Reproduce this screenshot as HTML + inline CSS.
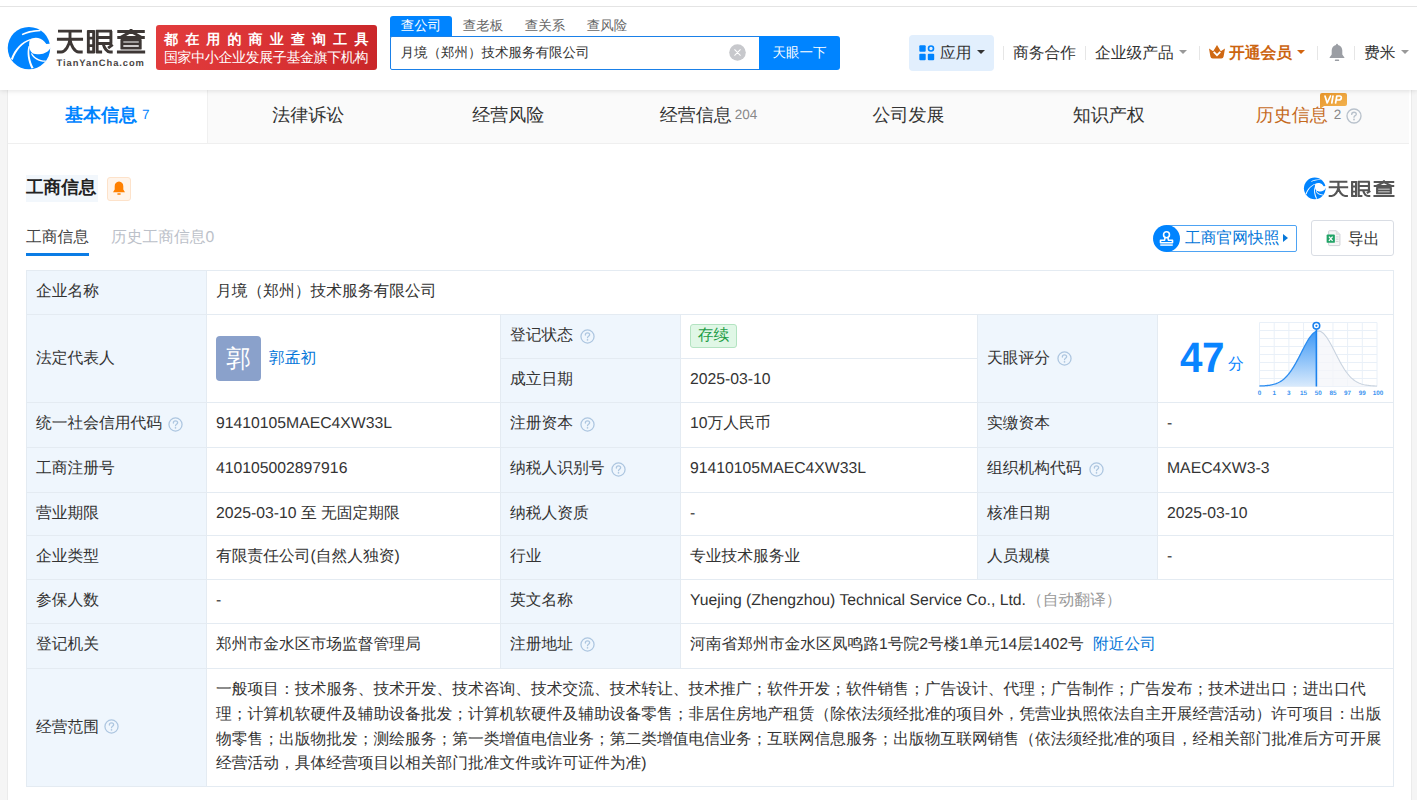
<!DOCTYPE html>
<html lang="zh"><head>
<meta charset="utf-8">
<title>天眼查</title>
<style>
*{box-sizing:border-box;margin:0;padding:0}
html,body{width:1417px;height:800px;overflow:hidden;background:#f5f5f5}
body{font-family:"Liberation Sans",sans-serif;font-size:15.75px;color:#333;position:relative;line-height:1;text-rendering:geometricPrecision}
.abs{position:absolute;white-space:nowrap}
a{text-decoration:none;color:#0677d9}
/* header */
#header{position:absolute;left:0;top:0;width:1417px;height:90px;background:#fff;box-shadow:0 1px 5px rgba(0,0,0,.11);z-index:5}
#card{position:absolute;left:7px;top:90px;width:1405px;height:720px;background:#fff;border-left:1px solid #ebebeb;border-right:1px solid #ebebeb}

/* header items */
#header{top:0;height:90px}
#header .line{position:absolute;left:0;top:6px;width:1417px;height:1px;background:#e4e4e4}
#banner{left:156px;top:25px;width:221px;height:45px;border-radius:3px;background:linear-gradient(100deg,#e23c3d 0%,#d83133 60%,#c92629 100%);color:#fff}
#banner .l1{position:absolute;left:8px;top:7px;font-size:14px;font-weight:bold;line-height:14px}
#banner .l2{position:absolute;left:8px;top:25px;font-size:14px;letter-spacing:-0.4px;line-height:14px}
#stab{left:390px;top:15.5px;height:21px;font-size:13.5px;line-height:20px}
#stab>span{display:inline-block;width:62px;text-align:center;color:#666;height:21px}
#stab>span.on{background:#0084ff;color:#fff;border-radius:3px 3px 0 0}
#sbox{left:390px;top:36px;width:370px;height:34px;border:1px solid #1a80e8;border-radius:2px 0 0 2px;background:#fff;font-size:13.5px;line-height:31px;padding-left:9.5px;color:#333}
#sbtn{left:759px;top:36px;width:81px;height:34px;background:#0084ff;border-radius:0 3px 3px 0;color:#fff;font-size:13.5px;line-height:33px;text-align:center}
#sclr{left:729.3px;top:43.6px;width:17px;height:17px}
#app{left:909px;top:35px;width:85px;height:36px;border-radius:4px;background:#e2effd}
.nav{font-size:15.75px;line-height:20px;top:43.5px;color:#333}
.sep{position:absolute;top:46px;width:1px;height:14px;background:#e6e6e6}
.caret{position:absolute;width:0;height:0;border-left:4px solid transparent;border-right:4px solid transparent;border-top:4.3px solid #999;top:50.4px}

/* tabs */
#tabs{position:absolute;left:0;top:0;width:1401px;height:54px;background:#fafafa;border-bottom:1px solid #efefef}
#tabs .t{position:absolute;top:0;height:53px;width:200.14px;text-align:center;font-size:18px;line-height:51px;color:#333;white-space:nowrap}
#tabs .t.on{background:#fff;color:#0084ff;font-weight:bold;border-right:1px solid #f0f0f0;height:53px}
#tabs .n{font-size:13.5px;font-weight:normal;color:#888;position:relative;top:-2px;margin-left:3px}
#tabs .t.on .n{color:#0084ff}
/* section */
#sec-title{left:26px;top:175px;height:27px;width:72px;background:#f2f7fc;font-size:17.6px;font-weight:bold;line-height:25.5px;color:#222}
#bellbox{left:107px;top:177px;width:24px;height:24px;background:#fff4ea;border:1px solid #fde2ca;border-radius:3px}
.stab1{left:26px;top:227.5px;font-size:15.75px;line-height:20px;color:#444}
.stab2{left:111px;top:227.5px;font-size:15.75px;line-height:20px;color:#bcc1c9}
#sul{left:26px;top:253.4px;width:63px;height:2.8px;background:#0b7ce5}
#btn1{left:1166px;top:225px;width:131px;height:27px;border:1px solid #4ea3f3;border-radius:2px;color:#0677d9;font-size:15.75px;line-height:26.5px;padding-left:18px}
#btn1c{left:1153px;top:225px;width:27px;height:27px;border-radius:50%;background:#0084ff}
#btn2{left:1311px;top:220px;width:83px;height:36px;border:1px solid #d9dde4;border-radius:3px;color:#333;font-size:15.75px;line-height:37.5px;padding-left:36px}
#content{position:absolute;left:0;top:0;width:1417px;height:800px}

/* table */
.c{position:absolute;border:1px solid #e4ebf2;background:#fff;white-space:nowrap;font-size:15.75px;color:#333;display:flex;align-items:flex-start;padding-left:9px;padding-top:8.2px;line-height:25px}
.c.m{align-items:center;padding-top:0}
.c.l{background:#eff6fd;color:#333}
.hp{position:absolute;width:15px;height:15px;color:#adc6e0}
.tag{display:inline-block;width:47px;height:24px;border:1px solid #b3e3c1;background:#e0f7e6;border-radius:3px;color:#1f9e48;text-align:center;line-height:22px;font-size:15.75px}
.avatar{position:absolute;left:9px;top:21px;width:45px;height:45px;border-radius:4px;background:#8aa1cb;color:#fff;font-size:24.75px;line-height:47px;text-align:center}
.gray{color:#999}
.en{position:relative;top:0}
.j{display:inline-block;white-space:nowrap;text-align:justify;text-align-last:justify}
</style>
</head>
<body>

<svg width="0" height="0" style="position:absolute">
<defs>
<symbol id="tyc-text" viewBox="0 0 141.7 48">
 <g fill="none" stroke="currentColor" stroke-width="4.1" stroke-linecap="butt" stroke-linejoin="miter">
  <!-- tian -->
  <path d="M8.5 10H42.5M7 21.5H44M25.5 10V21.5"></path>
  <path d="M25.5 21.5C24.5 30 19 39.5 13 39.5H7M25.5 21.5C26.5 30 32 39.5 38 39.5H43.5"></path>
  <!-- yan -->
  <path d="M51.5 9V41M59 9V41M50 10.5H60.5M51.5 20H59M51.5 30.5H59M50 39.5H60.5"></path>
  <path d="M64 8.5V41M62.5 10H85M83.5 10V28M64 19H83.5M64 27.5H85M62.5 39.5H71M72.5 28C74 34 78 39.5 82 39.5H86M86 29L79.5 34"></path>
  <!-- cha -->
  <path d="M92.5 10.5H131.5M112 7V10.5M92.5 19H131.5M112 10.5L97 19M112 10.5L127 19"></path>
  <path d="M99 22V35.5M125 22V35.5M97.5 22.5H126.5M99 28H125M97.5 34H126.5M92 39.5H132"></path>
 </g>
</symbol>
<symbol id="tyc-ball" viewBox="0 0 100 100">
 <circle cx="48" cy="50.2" r="40.8" fill="#0084ff"></circle>
 <path fill="#fff" d="M49.5 34C56 29 70 28.5 78 38C79.5 39.8 80.5 41.6 81.5 42.3L92 41.3L92 48.6L89.8 49.2C86 57 78 62 68 62C62 62 57.5 61 55 60C49.5 56 46.5 47 49.5 34Z"></path>
 <path fill="#fff" d="M13.2 71C20 52 34 37 50.5 32.5L51 35.2C36 40 24 54 16.8 73Z"></path>
 <path fill="#fff" d="M52.8 89.5C45.5 74 43.5 58 47.2 46L49.8 47C47 59 49.5 74 57 88.5Z"></path>
 <path fill="#fff" d="M53.5 59.5C58 67.5 67 73.5 80.5 74.2L79.5 76.6C66 76.5 55.5 70 52 61Z"></path>
 <path fill="#fff" d="M34 23.3C42 18.5 55 15.3 70.5 15.6L70 17.6C57 18.2 45 21 35.5 25.3Z"></path>
</symbol>
<symbol id="help" viewBox="0 0 16 16">
 <circle cx="8" cy="8" r="7" fill="none" stroke="currentColor" stroke-width="1.35"></circle>
 <path d="M5.7 6.4C5.7 5 6.7 4.2 8 4.2C9.3 4.2 10.3 5 10.3 6.2C10.3 7.6 8 7.7 8 9.2" fill="none" stroke="currentColor" stroke-width="1.35" stroke-linecap="round"></path>
 <circle cx="8" cy="11.5" r="0.9" fill="currentColor"></circle>
</symbol>
</defs>
</svg>

<div id="card"><div id="tabs"><div class="t on" style="left:0.00px;text-align:left;padding-left:57px"><span class="j" style="width: 72px;">基本信息</span><span class="n" style="margin-left:5px">7</span></div><div class="t" style="left:200.14px"><span class="j" style="width: 72px;">法律诉讼</span></div><div class="t" style="left:400.28px"><span class="j" style="width: 72px;">经营风险</span></div><div class="t" style="left:600.42px"><span class="j" style="width: 72px;">经营信息</span><span class="n">204</span></div><div class="t" style="left:800.56px"><span class="j" style="width: 72px;">公司发展</span></div><div class="t" style="left:1000.70px"><span class="j" style="width: 72px;">知识产权</span></div><div class="t" style="left:1200.84px;color:#c56a1d;text-align:left;padding-left:47px"><span class="j" style="width: 72px;">历史信息</span><span class="n" style="margin-left:6px">2</span></div><svg class="abs" style="left:1337.8px;top:18px;color:#b9c2cc" width="16" height="16"><use href="#help"></use></svg>
<svg class="abs" style="left:1311px;top:2px" width="30" height="18" viewBox="0 0 30 18"><defs><linearGradient id="vg" x1="0" y1="0" x2="1" y2="1"><stop offset="0" stop-color="#e8962b"></stop><stop offset="1" stop-color="#f3b451"></stop></linearGradient></defs><path d="M3 1H26Q28 1 28 3V12Q28 14 26 14H5L1 17V3Q1 1 3 1Z" fill="url(#vg)"></path><path d="M6 4L8.2 11L11.5 4M14 4L12.8 11M16.6 11L17.8 4H20.6Q22.6 4 22.3 6Q22 8 19.8 8H17.2" fill="none" stroke="#fff" stroke-width="1.7" stroke-linejoin="round" stroke-linecap="round"></path></svg>
</div></div>
<div id="content">
<div id="sec-title" class="abs"><span class="j" style="width: 70.38px;">工商信息</span></div>
<div id="bellbox" class="abs"></div>
<svg class="abs" style="left:112px;top:181px" width="14" height="15" viewBox="0 0 14 15"><path d="M7 0.6C4.3 0.6 2.7 2.8 2.7 5.2V8.6L1 11.2H13L11.3 8.6V5.2C11.3 2.8 9.7 0.6 7 0.6Z" fill="#ff8000"></path><rect x="5.2" y="12.2" width="3.6" height="1.6" rx="0.8" fill="#ff8000"></rect></svg>
<div class="abs stab1"><span class="j" style="width: 63px;">工商信息</span></div>
<div class="abs stab2"><span class="j" style="width: 103.27px;">历史工商信息0</span></div>
<div id="sul" class="abs"></div>
<svg class="abs" style="left:1302.2px;top:175.1px" width="26.6" height="26.6"><use href="#tyc-ball" width="26.6" height="26.6"></use></svg>
<svg class="abs" style="left:1324.9px;top:177.2px;color:#555" width="74.6" height="23" viewBox="0 0 141.7 48" preserveAspectRatio="none"><use href="#tyc-text"></use></svg>
<div id="btn1" class="abs"><span class="j" style="width: 94.5px;">工商官网快照</span></div>
<div class="abs" style="left:1283px;top:234px;width:0;height:0;border-top:4px solid transparent;border-bottom:4px solid transparent;border-left:5px solid #0677d9"></div>
<div id="btn1c" class="abs"></div>
<svg class="abs" style="left:1158px;top:229.5px" width="17" height="17" viewBox="0 0 15 15"><circle cx="7.5" cy="4.2" r="2.6" fill="none" stroke="#fff" stroke-width="1.4"></circle><path d="M6.3 6.5L5.8 9H2.2V11.2H12.8V9H9.2L8.7 6.5" fill="none" stroke="#fff" stroke-width="1.4" stroke-linejoin="round"></path><path d="M2 13.3H13" stroke="#fff" stroke-width="1.3"></path></svg>
<div id="btn2" class="abs"><span class="j" style="width: 31.5px;">导出</span></div>
<svg class="abs" style="left:1325.5px;top:230px" width="15" height="16.5" viewBox="0 0 16 18"><path d="M3.5 0.8H11L15 4.8V16.2Q15 17 14.2 17H3.5Q2.7 17 2.7 16.2V1.6Q2.7 0.8 3.5 0.8Z" fill="#f6f6f6" stroke="#c9cdd2" stroke-width="1"></path><path d="M11 0.8V4.8H15" fill="#e4e4e4" stroke="#d5d5d5" stroke-width="0.6"></path><path d="M10.5 7.5H13.5M10.5 10H13.5M10.5 12.5H13.5" stroke="#cfcfcf" stroke-width="1"></path><rect x="0.5" y="5" width="9" height="9" rx="1" fill="#21a366"></rect><path d="M3 7.2L7 11.8M7 7.2L3 11.8" stroke="#fff" stroke-width="1.4"></path></svg>

<div class="c l" style="left:26px;top:270px;width:181px;height:45px;"><span class="j" style="width: 63px;">企业名称</span></div>
<div class="c" style="left:206px;top:270px;width:1188px;height:45px;"><span class="j" style="width: 220.5px;">月境（郑州）技术服务有限公司</span></div>
<div class="c l m" style="left:26px;top:314px;width:181px;height:89px;"><span class="j" style="width: 78.75px;">法定代表人</span></div>
<div class="c m" style="left:206px;top:314px;width:295px;height:89px;"><div class="avatar"><span class="j" style="width: 24.75px;">郭</span></div><a style="margin-left:53px"><span class="j" style="width: 47.25px;">郭孟初</span></a></div>
<div class="c l" style="left:500px;top:314px;width:181px;height:45px;"><span class="j" style="width: 63px;">登记状态</span></div>
<div class="c" style="left:680px;top:314px;width:298px;height:45px;"><span class="tag" style="position:relative;top:0.8px"><span class="j" style="width: 31.5px;">存续</span></span></div>
<div class="c l" style="left:500px;top:358px;width:181px;height:45px;"><span class="j" style="width: 63px;">成立日期</span></div>
<div class="c" style="left:680px;top:358px;width:298px;height:45px;"><span class="en">2025-03-10</span></div>
<div class="c l m" style="left:977px;top:314px;width:181px;height:89px;"><span class="j" style="width: 63px;">天眼评分</span></div>
<div class="c m" style="left:1157px;top:314px;width:237px;height:89px;"><span style="position:absolute;left:22px;top:19px;font-size:42.5px;font-weight:bold;color:#0a84ff;line-height:50px;transform:scaleX(0.95);transform-origin:0 50%;letter-spacing:-0.5px">47</span><span style="position:absolute;left:70px;top:40px;font-size:15.75px;color:#0a84ff;line-height:20px"><span class="j" style="width: 15.75px;">分</span></span></div>
<div class="c l" style="left:26px;top:402px;width:181px;height:46px;"><span class="j" style="width: 126px;">统一社会信用代码</span></div>
<div class="c" style="left:206px;top:402px;width:295px;height:46px;"><span class="en">91410105MAEC4XW33L</span></div>
<div class="c l" style="left:500px;top:402px;width:181px;height:46px;"><span class="j" style="width: 63px;">注册资本</span></div>
<div class="c" style="left:680px;top:402px;width:298px;height:46px;"><span class="j" style="width: 80.53px;">10万人民币</span></div>
<div class="c l" style="left:977px;top:402px;width:181px;height:46px;"><span class="j" style="width: 63px;">实缴资本</span></div>
<div class="c" style="left:1157px;top:402px;width:237px;height:46px;">-</div>
<div class="c l" style="left:26px;top:447px;width:181px;height:46px;"><span class="j" style="width: 78.75px;">工商注册号</span></div>
<div class="c" style="left:206px;top:447px;width:295px;height:46px;"><span class="en">410105002897916</span></div>
<div class="c l" style="left:500px;top:447px;width:181px;height:46px;"><span class="j" style="width: 94.5px;">纳税人识别号</span></div>
<div class="c" style="left:680px;top:447px;width:298px;height:46px;"><span class="en">91410105MAEC4XW33L</span></div>
<div class="c l" style="left:977px;top:447px;width:181px;height:46px;"><span class="j" style="width: 94.5px;">组织机构代码</span></div>
<div class="c" style="left:1157px;top:447px;width:237px;height:46px;"><span class="en">MAEC4XW3-3</span></div>
<div class="c l" style="left:26px;top:492px;width:181px;height:44px;"><span class="j" style="width: 63px;">营业期限</span></div>
<div class="c" style="left:206px;top:492px;width:295px;height:44px;"><span class="j" style="width: 183.83px;">2025-03-10 至 无固定期限</span></div>
<div class="c l" style="left:500px;top:492px;width:181px;height:44px;"><span class="j" style="width: 78.75px;">纳税人资质</span></div>
<div class="c" style="left:680px;top:492px;width:298px;height:44px;">-</div>
<div class="c l" style="left:977px;top:492px;width:181px;height:44px;"><span class="j" style="width: 63px;">核准日期</span></div>
<div class="c" style="left:1157px;top:492px;width:237px;height:44px;"><span class="en">2025-03-10</span></div>
<div class="c l" style="left:26px;top:535px;width:181px;height:45px;"><span class="j" style="width: 63px;">企业类型</span></div>
<div class="c" style="left:206px;top:535px;width:295px;height:45px;"><span class="j" style="width: 183.75px;">有限责任公司(自然人独资)</span></div>
<div class="c l" style="left:500px;top:535px;width:181px;height:45px;"><span class="j" style="width: 31.5px;">行业</span></div>
<div class="c" style="left:680px;top:535px;width:298px;height:45px;"><span class="j" style="width: 110.25px;">专业技术服务业</span></div>
<div class="c l" style="left:977px;top:535px;width:181px;height:45px;"><span class="j" style="width: 63px;">人员规模</span></div>
<div class="c" style="left:1157px;top:535px;width:237px;height:45px;">-</div>
<div class="c l" style="left:26px;top:579px;width:181px;height:45px;"><span class="j" style="width: 63px;">参保人数</span></div>
<div class="c" style="left:206px;top:579px;width:295px;height:45px;">-</div>
<div class="c l" style="left:500px;top:579px;width:181px;height:45px;"><span class="j" style="width: 63px;">英文名称</span></div>
<div class="c" style="left:680px;top:579px;width:714px;height:45px;">Yuejing (Zhengzhou) Technical Service Co., Ltd.<span class="gray" style="position:absolute;left:346px"><span class="j" style="width: 94.5px;">（自动翻译）</span></span></div>
<div class="c l" style="left:26px;top:623px;width:181px;height:46px;"><span class="j" style="width: 63px;">登记机关</span></div>
<div class="c" style="left:206px;top:623px;width:295px;height:46px;"><span class="j" style="width: 204.75px;">郑州市金水区市场监督管理局</span></div>
<div class="c l" style="left:500px;top:623px;width:181px;height:46px;"><span class="j" style="width: 63px;">注册地址</span></div>
<div class="c" style="left:680px;top:623px;width:714px;height:46px;"><span class="j" style="width: 393.84px;">河南省郑州市金水区凤鸣路1号院2号楼1单元14层1402号</span><a style="position:absolute;left:412px"><span class="j" style="width: 63px;">附近公司</span></a></div>
<div class="c l m" style="left:26px;top:668px;width:181px;height:119px;"><span class="j" style="width: 63px;">经营范围</span></div>
<div class="c m" style="left:206px;top:668px;width:1188px;height:119px;"><div style="line-height:24.75px;position:relative;top:0"><span class="j" style="width: 1149.75px;">一般项目：技术服务、技术开发、技术咨询、技术交流、技术转让、技术推广；软件开发；软件销售；广告设计、代理；广告制作；广告发布；技术进出口；进出口代</span><br><span class="j" style="width: 1165.5px;">理；计算机软硬件及辅助设备批发；计算机软硬件及辅助设备零售；非居住房地产租赁（除依法须经批准的项目外，凭营业执照依法自主开展经营活动）许可项目：出版</span><br><span class="j" style="width: 1165.5px;">物零售；出版物批发；测绘服务；第一类增值电信业务；第二类增值电信业务；互联网信息服务；出版物互联网销售（依法须经批准的项目，经相关部门批准后方可开展</span><br><span class="j" style="width: 430.5px;">经营活动，具体经营项目以相关部门批准文件或许可证件为准)</span></div></div>
<svg class="hp" style="left:580.0px;top:328.5px"><use href="#help" width="15" height="15"></use></svg>
<svg class="hp" style="left:580.0px;top:416.5px"><use href="#help" width="15" height="15"></use></svg>
<svg class="hp" style="left:611.0px;top:462.0px"><use href="#help" width="15" height="15"></use></svg>
<svg class="hp" style="left:167.8px;top:416.5px"><use href="#help" width="15" height="15"></use></svg>
<svg class="hp" style="left:1057.0px;top:350.5px"><use href="#help" width="15" height="15"></use></svg>
<svg class="hp" style="left:1088.5px;top:461.5px"><use href="#help" width="15" height="15"></use></svg>
<svg class="hp" style="left:580.0px;top:636.5px"><use href="#help" width="15" height="15"></use></svg>
<svg class="hp" style="left:104.3px;top:719.0px"><use href="#help" width="15" height="15"></use></svg>
<!--CHART--><svg class="abs" style="left:1250px;top:316px" width="140" height="86" viewBox="0 0 140 86">
<defs><linearGradient id="bg1" x1="0" y1="0" x2="0" y2="1"><stop offset="0" stop-color="#3d98f5"></stop><stop offset="1" stop-color="#d9eafc"></stop></linearGradient></defs>
<path d="M9.50 6.50V70.50M24.19 6.50V70.50M38.88 6.50V70.50M53.56 6.50V70.50M68.25 6.50V70.50M82.94 6.50V70.50M97.62 6.50V70.50M112.31 6.50V70.50M127.00 6.50V70.50M9.50 6.50H127.00M9.50 14.50H127.00M9.50 22.50H127.00M9.50 30.50H127.00M9.50 38.50H127.00M9.50 46.50H127.00M9.50 54.50H127.00M9.50 62.50H127.00M9.50 70.50H127.00" fill="none" stroke="#e9f0f8" stroke-width="1"></path>
<path d="M66.40 15.33 L67.27 15.09 L68.25 15.00 L69.23 15.09 L70.21 15.36 L71.19 15.82 L72.17 16.44 L73.15 17.24 L74.12 18.20 L75.10 19.30 L76.08 20.55 L77.06 21.93 L78.04 23.43 L79.02 25.03 L80.00 26.72 L80.98 28.48 L81.96 30.30 L82.94 32.18 L83.92 34.08 L84.90 36.00 L85.88 37.93 L86.85 39.84 L87.83 41.74 L88.81 43.61 L89.79 45.43 L90.77 47.21 L91.75 48.93 L92.73 50.59 L93.71 52.17 L94.69 53.69 L95.67 55.12 L96.65 56.48 L97.62 57.75 L98.60 58.94 L99.58 60.05 L100.56 61.08 L101.54 62.04 L102.52 62.91 L103.50 63.72 L104.48 64.45 L105.46 65.11 L106.44 65.72 L107.42 66.26 L108.40 66.75 L109.38 67.18 L110.35 67.57 L111.33 67.92 L112.31 68.22 L113.29 68.49 L114.27 68.73 L115.25 68.93 L116.23 69.11 L117.21 69.27 L118.19 69.40 L119.17 69.52 L120.15 69.62 L121.12 69.70 L122.10 69.78 L123.08 69.84 L124.06 69.89 L125.04 69.93 L126.02 69.97 L127.00 70.00 L127.00 70.50 L66.40 70.50 Z" fill="#f4f6f9" fill-opacity="0.75"></path>
<path d="M66.40 15.33 L67.27 15.09 L68.25 15.00 L69.23 15.09 L70.21 15.36 L71.19 15.82 L72.17 16.44 L73.15 17.24 L74.12 18.20 L75.10 19.30 L76.08 20.55 L77.06 21.93 L78.04 23.43 L79.02 25.03 L80.00 26.72 L80.98 28.48 L81.96 30.30 L82.94 32.18 L83.92 34.08 L84.90 36.00 L85.88 37.93 L86.85 39.84 L87.83 41.74 L88.81 43.61 L89.79 45.43 L90.77 47.21 L91.75 48.93 L92.73 50.59 L93.71 52.17 L94.69 53.69 L95.67 55.12 L96.65 56.48 L97.62 57.75 L98.60 58.94 L99.58 60.05 L100.56 61.08 L101.54 62.04 L102.52 62.91 L103.50 63.72 L104.48 64.45 L105.46 65.11 L106.44 65.72 L107.42 66.26 L108.40 66.75 L109.38 67.18 L110.35 67.57 L111.33 67.92 L112.31 68.22 L113.29 68.49 L114.27 68.73 L115.25 68.93 L116.23 69.11 L117.21 69.27 L118.19 69.40 L119.17 69.52 L120.15 69.62 L121.12 69.70 L122.10 69.78 L123.08 69.84 L124.06 69.89 L125.04 69.93 L126.02 69.97 L127.00 70.00" fill="none" stroke="#c9d3df" stroke-width="1.1"></path>
<path d="M9.50 70.00 L10.48 69.97 L11.46 69.93 L12.44 69.89 L13.42 69.84 L14.40 69.78 L15.38 69.70 L16.35 69.62 L17.33 69.52 L18.31 69.40 L19.29 69.27 L20.27 69.11 L21.25 68.93 L22.23 68.73 L23.21 68.49 L24.19 68.22 L25.17 67.92 L26.15 67.57 L27.12 67.18 L28.10 66.75 L29.08 66.26 L30.06 65.72 L31.04 65.11 L32.02 64.45 L33.00 63.72 L33.98 62.91 L34.96 62.04 L35.94 61.08 L36.92 60.05 L37.90 58.94 L38.88 57.75 L39.85 56.48 L40.83 55.12 L41.81 53.69 L42.79 52.17 L43.77 50.59 L44.75 48.93 L45.73 47.21 L46.71 45.43 L47.69 43.61 L48.67 41.74 L49.65 39.84 L50.62 37.93 L51.60 36.00 L52.58 34.08 L53.56 32.18 L54.54 30.30 L55.52 28.48 L56.50 26.72 L57.48 25.03 L58.46 23.43 L59.44 21.93 L60.42 20.55 L61.40 19.30 L62.38 18.20 L63.35 17.24 L64.33 16.44 L65.31 15.82 L66.29 15.36 L66.40 15.33 L66.40 70.50 L9.50 70.50 Z" fill="url(#bg1)"></path>
<path d="M9.50 70.00 L10.48 69.97 L11.46 69.93 L12.44 69.89 L13.42 69.84 L14.40 69.78 L15.38 69.70 L16.35 69.62 L17.33 69.52 L18.31 69.40 L19.29 69.27 L20.27 69.11 L21.25 68.93 L22.23 68.73 L23.21 68.49 L24.19 68.22 L25.17 67.92 L26.15 67.57 L27.12 67.18 L28.10 66.75 L29.08 66.26 L30.06 65.72 L31.04 65.11 L32.02 64.45 L33.00 63.72 L33.98 62.91 L34.96 62.04 L35.94 61.08 L36.92 60.05 L37.90 58.94 L38.88 57.75 L39.85 56.48 L40.83 55.12 L41.81 53.69 L42.79 52.17 L43.77 50.59 L44.75 48.93 L45.73 47.21 L46.71 45.43 L47.69 43.61 L48.67 41.74 L49.65 39.84 L50.62 37.93 L51.60 36.00 L52.58 34.08 L53.56 32.18 L54.54 30.30 L55.52 28.48 L56.50 26.72 L57.48 25.03 L58.46 23.43 L59.44 21.93 L60.42 20.55 L61.40 19.30 L62.38 18.20 L63.35 17.24 L64.33 16.44 L65.31 15.82 L66.29 15.36 L66.40 15.33" fill="none" stroke="#2b8cf0" stroke-width="1.3"></path>
<path d="M66.40 13.50V70.50" stroke="#1b82ee" stroke-width="1.6"></path>
<circle cx="66.40" cy="9.80" r="3.3" fill="#fff" stroke="#1b82ee" stroke-width="1.6"></circle>
<circle cx="66.40" cy="9.80" r="1.1" fill="#1b82ee"></circle>
<g font-family="Liberation Sans, sans-serif" font-size="6.3" fill="#3b93f0" font-weight="bold"><text x="9.50" y="78.80" text-anchor="middle">0</text><text x="24.19" y="78.80" text-anchor="middle">1</text><text x="38.88" y="78.80" text-anchor="middle">3</text><text x="53.56" y="78.80" text-anchor="middle">15</text><text x="68.25" y="78.80" text-anchor="middle">50</text><text x="82.94" y="78.80" text-anchor="middle">85</text><text x="97.62" y="78.80" text-anchor="middle">97</text><text x="112.31" y="78.80" text-anchor="middle">99</text><text x="128.00" y="78.80" text-anchor="middle">100</text></g>
</svg><!--/CHART-->
</div>

<div id="header">
 <div class="line"></div>
 <svg class="abs" style="left:4px;top:22px" width="52" height="52"><use href="#tyc-ball" x="0" y="0" width="52" height="52" transform="translate(0 0)"></use></svg>
 <svg class="abs" style="left:52px;top:24px;color:#3d3735" width="100" height="34" viewBox="0 0 141.7 48" preserveAspectRatio="none"><use href="#tyc-text"></use></svg>
 <div class="abs" style="left:56.5px;top:56.5px;font-size:9.4px;font-weight:bold;letter-spacing:0.93px;color:#4a4544;line-height:11px">TianYanCha.com</div>
 <div id="banner" class="abs"><div class="l1"><span class="j" style="width: 204.4px;">都在用的商业查询工具</span></div><div class="l2"><span class="j" style="width: 204.02px;">国家中小企业发展子基金旗下机构</span></div></div>
 <div id="stab" class="abs"><span class="on"><span class="j" style="width: 40.5px;">查公司</span></span><span><span class="j" style="width: 40.5px;">查老板</span></span><span><span class="j" style="width: 40.5px;">查关系</span></span><span><span class="j" style="width: 40.5px;">查风险</span></span></div>
 <div id="sbox" class="abs"><span class="j" style="width: 189px;">月境（郑州）技术服务有限公司</span></div>
 <svg id="sclr" class="abs" viewBox="0 0 17 17"><circle cx="8.5" cy="8.5" r="8.3" fill="#c7c8cc"></circle><path d="M5.7 5.7L11.3 11.3M11.3 5.7L5.7 11.3" stroke="#fff" stroke-width="1.05" stroke-linecap="round"></path></svg>
 <div id="sbtn" class="abs"><span class="j" style="width: 54px;">天眼一下</span></div>
 <div id="app" class="abs"></div>
 <svg class="abs" style="left:919px;top:45px" width="16" height="16" viewBox="0 0 16 16"><rect x="0.3" y="0.3" width="6.4" height="6.4" rx="1" fill="#0084ff"></rect><rect x="0.3" y="8.8" width="6.4" height="6.4" rx="1" fill="#0084ff"></rect><rect x="8.8" y="8.8" width="6.4" height="6.4" rx="1" fill="#0084ff"></rect><circle cx="12" cy="3.5" r="2.5" fill="none" stroke="#0084ff" stroke-width="1.6"></circle></svg>
 <div class="abs nav" style="left:940px"><span class="j" style="width: 31.5px;">应用</span></div>
 <div class="caret" style="left:977px;border-top-color:#333"></div>
 <div class="sep" style="left:1003px"></div>
 <div class="abs nav" style="left:1013px"><span class="j" style="width: 63px;">商务合作</span></div>
 <div class="sep" style="left:1085px"></div>
 <div class="abs nav" style="left:1095px"><span class="j" style="width: 78.75px;">企业级产品</span></div>
 <div class="caret" style="left:1179px"></div>
 <div class="sep" style="left:1199px"></div>
 <svg class="abs" style="left:1208px;top:44px" width="18" height="16" viewBox="0 0 18 16"><path d="M1 4.4L5.2 7.2L9 0.9L12.8 7.2L17 4.4L15.6 12.6Q15.3 14.6 13.3 14.6H4.7Q2.7 14.6 2.4 12.6Z" fill="#cf6812"></path><path d="M5.7 7.9L9 11.1L12.3 7.9" fill="none" stroke="#fff" stroke-width="1.9"></path></svg>
 <div class="abs nav" style="left:1229px;color:#cc6511;font-weight:bold"><span class="j" style="width: 63px;">开通会员</span></div>
 <div class="caret" style="left:1297px;border-top-color:#d2640f"></div>
 <div class="sep" style="left:1317px"></div>
 <svg class="abs" style="left:1327.5px;top:43px" width="18" height="19" viewBox="0 0 18 19"><path d="M9 0.8Q9.9 0.8 10 1.9C12.8 2.5 14.3 4.8 14.3 7.4V11.4L16.4 14.4Q16.6 15 16 15H2Q1.4 15 1.6 14.4L3.7 11.4V7.4C3.7 4.8 5.2 2.5 8 1.9Q8.1 0.8 9 0.8Z" fill="#9b9ea4"></path><rect x="6.8" y="16.4" width="4.4" height="1.7" rx="0.85" fill="#9b9ea4"></rect></svg>
 <div class="sep" style="left:1354px"></div>
 <div class="abs nav" style="left:1364px"><span class="j" style="width: 31.5px;">费米</span></div>
 <div class="caret" style="left:1401px"></div>
</div>



</body></html>
